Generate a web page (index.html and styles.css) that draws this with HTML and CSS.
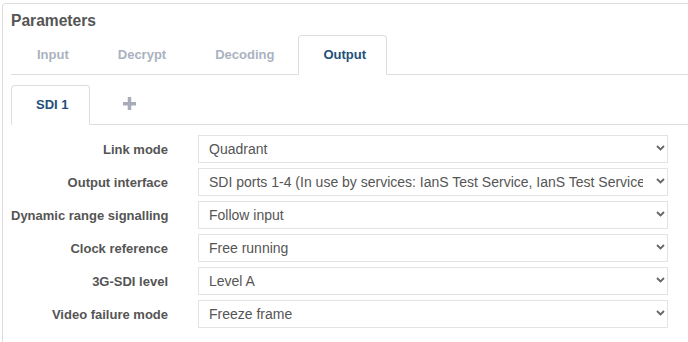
FILE: index.html
```html
<!DOCTYPE html>
<html lang="en">
<head>
  <meta charset="UTF-8" />
  <title>Parameters</title>
  <link rel="stylesheet" href="styles.css">
</head>
<body>
  <div class="panel">
    <h3 class="panel-title">Parameters</h3>

    <!-- Main tabs -->
    <ul class="tabs">
      <li><a href="#">Input</a></li>
      <li><a href="#">Decrypt</a></li>
      <li><a href="#">Decoding</a></li>
      <li class="active"><a href="#">Output</a></li>
    </ul>

    <!-- Output sub tabs -->
    <ul class="tabs sub-tabs">
      <li class="active"><a href="#">SDI 1</a></li>
      <li class="add-tab">
        <a href="#" title="Add output">
          <svg width="13" height="13" viewBox="0 0 13 13"><rect x="0" y="5" width="13" height="3.5"/><rect x="4.75" y="0" width="3.5" height="13"/></svg>
        </a>
      </li>
    </ul>

    <!-- Output settings -->
    <div class="form">
      <label>Link mode</label>
      <div class="select-wrap">
        <select><option>Quadrant</option></select>
        <svg class="chev" width="9" height="6" viewBox="0 0 9 6"><path d="M1 1 L4.5 4.5 L8 1"/></svg>
      </div>

      <label>Output interface</label>
      <div class="select-wrap">
        <select><option>SDI ports 1-4 (In use by services: IanS Test Service, IanS Test Service, IanS Test Service)</option></select>
        <svg class="chev" width="9" height="6" viewBox="0 0 9 6"><path d="M1 1 L4.5 4.5 L8 1"/></svg>
      </div>

      <label>Dynamic range signalling</label>
      <div class="select-wrap">
        <select><option>Follow input</option></select>
        <svg class="chev" width="9" height="6" viewBox="0 0 9 6"><path d="M1 1 L4.5 4.5 L8 1"/></svg>
      </div>

      <label>Clock reference</label>
      <div class="select-wrap">
        <select><option>Free running</option></select>
        <svg class="chev" width="9" height="6" viewBox="0 0 9 6"><path d="M1 1 L4.5 4.5 L8 1"/></svg>
      </div>

      <label>3G-SDI level</label>
      <div class="select-wrap">
        <select><option>Level A</option></select>
        <svg class="chev" width="9" height="6" viewBox="0 0 9 6"><path d="M1 1 L4.5 4.5 L8 1"/></svg>
      </div>

      <label>Video failure mode</label>
      <div class="select-wrap">
        <select><option>Freeze frame</option></select>
        <svg class="chev" width="9" height="6" viewBox="0 0 9 6"><path d="M1 1 L4.5 4.5 L8 1"/></svg>
      </div>
    </div>
  </div>
</body>
</html>
```

FILE: styles.css
```css
:root {
  --border: #dddddd;
  --field-border: #e3e3e3;
  --text: #555555;
  --tab-muted: #aab2bf;
  --tab-active: #1f4f7b;
}

body {
  font-family: "Liberation Sans", Arial, sans-serif;
  margin: 0;
  background: white;
  color: var(--text);
}

.panel {
  margin: 3px 0 0 2px;
  padding: 0 0 20px 8px;
  border-top: 1px solid var(--border);
  border-left: 1px solid var(--border);
  border-top-left-radius: 4px;
}

.panel-title {
  margin: 0;
  padding-top: 8px;
  font-size: 15.6px;
  line-height: 18px;
  font-weight: bold;
  color: var(--text);
}

.tabs {
  display: flex;
  list-style: none;
  margin: 5px 0 0 0;
  padding: 0 0 0 1px;
  border-bottom: 1px solid var(--border);
}

.tabs li {
  margin-bottom: -1px;
  margin-right: 3px;
}

.tabs a {
  display: block;
  padding: 10px 20px 11px 24px;
  line-height: 17px;
  font-size: 13px;
  font-weight: bold;
  color: var(--tab-muted);
  text-decoration: none;
  border: 1px solid transparent;
  border-radius: 4px 4px 0 0;
}

.tabs .active a {
  color: var(--tab-active);
  background: white;
  border-color: var(--border) var(--border) transparent;
}

.sub-tabs {
  margin-top: 10px;
  padding-left: 0;
}

.add-tab a {
  padding-top: 9px;
  padding-bottom: 12px;
  padding-left: 29px;
  height: 17px;
  display: flex;
  align-items: center;
}

.add-tab svg {
  fill: #a7acba;
}

.form {
  display: grid;
  grid-template-columns: 157px 470px;
  column-gap: 30px;
  row-gap: 5px;
  align-items: center;
  margin-top: 10px;
}

.form label {
  text-align: right;
  white-space: nowrap;
  font-size: 13px;
  font-weight: bold;
  color: var(--text);
}

.select-wrap {
  position: relative;
}

.select-wrap select {
  display: block;
  width: 100%;
  height: 28px;
  margin: 0;
  padding: 0 24px 0 10px;
  font-family: inherit;
  font-size: 14px;
  color: var(--text);
  background: white;
  border: 1px solid var(--field-border);
  border-radius: 0;
  appearance: none;
  -webkit-appearance: none;
  outline: none;
}

.chev {
  position: absolute;
  right: 3px;
  top: 10px;
  fill: none;
  stroke: #666;
  stroke-width: 1.8;
}
```
